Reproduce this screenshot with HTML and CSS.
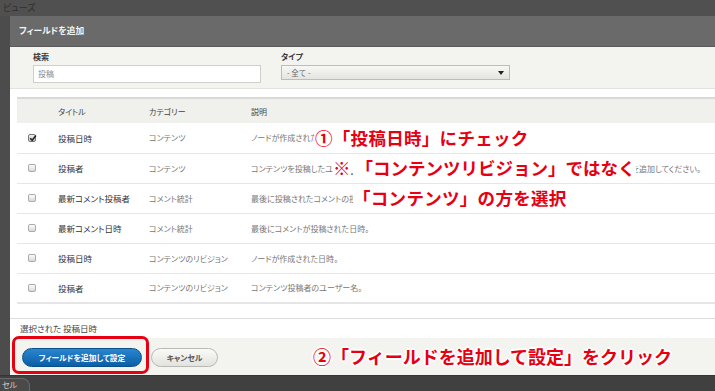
FILE: index.html
```html
<!DOCTYPE html>
<html>
	<head>
		<meta charset="UTF-8">
		<title>フィールドを追加</title>
		<link rel="stylesheet" href="styles.css">
	</head>
	<body>
		<div class="page-head">ビューズ</div>

		<div class="dialog">
			<div class="dialog-title">フィールドを追加</div>

			<div class="filters">
				<div class="filter filter-search">
					<label>検索</label>
					<div class="input">投稿</div>
				</div>
				<div class="filter filter-type">
					<label>タイプ</label>
					<div class="select">
						<span>- 全て -</span>
						<span class="select-arrow"></span>
					</div>
				</div>
			</div>

			<div class="scroll">
				<table class="fields">
					<thead>
						<tr>
							<th class="col-check"></th>
							<th class="col-title">タイトル</th>
							<th class="col-cat">カテゴリー</th>
							<th>説明</th>
						</tr>
					</thead>
					<tbody>
						<tr>
							<td class="col-check"><span class="cb checked"><svg viewBox="0 0 8 8"><path d="M1.2 4.2 L3.2 6.2 L6.9 1.6" fill="none" stroke="#222" stroke-width="1.6"/></svg></span></td>
							<td class="col-title">投稿日時</td>
							<td class="col-cat">コンテンツ</td>
							<td class="desc">ノードが作成された日時。</td>
						</tr>
						<tr>
							<td class="col-check"><span class="cb"></span></td>
							<td class="col-title">投稿者</td>
							<td class="col-cat">コンテンツ</td>
							<td class="desc">コンテンツを投稿したユーザー。ユーザー名、メールやプロフィールなどの情報を表示するにはリレーションシップを追加してください。</td>
						</tr>
						<tr>
							<td class="col-check"><span class="cb"></span></td>
							<td class="col-title">最新コメント投稿者</td>
							<td class="col-cat">コメント統計</td>
							<td class="desc">最後に投稿されたコメントの投稿者の名前。</td>
						</tr>
						<tr>
							<td class="col-check"><span class="cb"></span></td>
							<td class="col-title">最新コメント日時</td>
							<td class="col-cat">コメント統計</td>
							<td class="desc">最後にコメントが投稿された日時。</td>
						</tr>
						<tr>
							<td class="col-check"><span class="cb"></span></td>
							<td class="col-title">投稿日時</td>
							<td class="col-cat">コンテンツのリビジョン</td>
							<td class="desc">ノードが作成された日時。</td>
						</tr>
						<tr class="last">
							<td class="col-check"><span class="cb"></span></td>
							<td class="col-title">投稿者</td>
							<td class="col-cat">コンテンツのリビジョン</td>
							<td class="desc">コンテンツ投稿者のユーザー名。</td>
						</tr>
					</tbody>
				</table>
			</div>

			<div class="selected">選択された 投稿日時</div>

			<div class="footer">
				<span class="btn btn-primary">フィールドを追加して設定</span>
				<span class="btn btn-cancel">キャンセル</span>
			</div>
		</div>

		<div class="page-foot">
			<span class="back-btn">セル</span>
		</div>

		<!-- 注釈 -->
		<div class="note note-1">①「投稿日時」にチェック</div>
		<div class="note note-2">※<span class="note-dot">.</span>「コンテンツリビジョン」ではなく</div>
		<div class="note note-3">「コンテンツ」の方を選択</div>
		<div class="note note-4">②「フィールドを追加して設定」をクリック</div>
		<div class="highlight"></div>
	</body>
</html>
```

FILE: styles.css
```css
*{
	margin: 0;
	padding: 0;
	box-sizing: border-box;
}
body{
	width: 715px;
	height: 391px;
	overflow: hidden;
	position: relative;
	background-color: #4c4c4c;
	font-family: "Noto Sans CJK JP", "Noto Sans", sans-serif;
	font-feature-settings: "palt";
}
.page-head{
	height: 16px;
	line-height: 16px;
	padding-left: 3px;
	font-size: 9px;
	color: #2f2f2f;
	background-color: #505050;
}

/* ダイアログ */
.dialog{
	margin-left: 10px;
	width: 705px;
	height: 359px;
	display: flex;
	flex-direction: column;
	overflow: hidden;
}
.dialog-title{
	height: 31px;
	line-height: 30px;
	padding-left: 9px;
	background-color: #6a6a6a;
	border-bottom: 1px solid #5a5a5a;
	color: #f6f6f6;
	font-size: 8.75px;
	font-weight: bold;
}
.filters{
	height: 41px;
	padding: 5px 0 0 23px;
	display: flex;
	gap: 20px;
	background-color: #f3f3ef;
}
.filter label{
	display: block;
	height: 10px;
	line-height: 10px;
	font-size: 8px;
	font-weight: bold;
	color: #3a3a3a;
}
.filter-search{
	width: 228px;
}
.filter-type{
	width: 229px;
}
.input{
	margin-top: 3px;
	height: 18px;
	line-height: 16px;
	padding-left: 4px;
	background-color: #fff;
	border: 1px solid #cfcfcb;
	font-size: 8px;
	color: #8a8a8a;
}
.select{
	margin-top: 3px;
	height: 15px;
	line-height: 13px;
	padding: 0 5px 0 5px;
	display: flex;
	justify-content: space-between;
	align-items: center;
	background: linear-gradient(#f7f7f5, #e4e4e0);
	border: 1px solid #bdbdb8;
	font-size: 7.5px;
	color: #666;
	font-feature-settings: normal;
	white-space: pre;
}
.select-arrow{
	width: 0;
	height: 0;
	border-left: 3px solid transparent;
	border-right: 3px solid transparent;
	border-top: 4px solid #222;
}

/* 一覧 */
.scroll{
	height: 230px;
	padding: 8px 0 0 7px;
	background-color: #fff;
	border-top: 1px solid #e2e2de;
}
.fields{
	width: 720px;
	border-collapse: collapse;
	font-size: 8.5px;
	text-align: left;
}
.fields thead tr{
	height: 25px;
	background-color: #f0f0ec;
	border-top: 2px solid #d9d9d6;
}
.fields th{
	font-weight: normal;
	color: #444;
	font-size: 8px;
}
.fields tbody tr{
	height: 30px;
	border-bottom: 1px solid #e6e6e6;
}
.fields tbody tr.last{
	border-bottom: 2px solid #e6e6e6;
}
.col-check{
	width: 41px;
	padding-left: 11px;
}
.col-title{
	width: 91px;
	color: #333;
}
.col-cat{
	width: 102px;
	color: #777;
	font-size: 8px;
}
.desc{
	color: #777;
	font-size: 8px;
	white-space: nowrap;
}
.cb{
	display: block;
	width: 8px;
	height: 8px;
	border: 1px solid #aaa;
	border-radius: 2px;
	background: linear-gradient(#fdfdfd, #d8d8d8);
}
.cb svg{
	display: block;
	width: 8px;
	height: 8px;
	margin: -1px 0 0 0;
}
.cb.checked{
	border-color: #777;
	background: linear-gradient(#f0f0f0, #c8c8c8);
}
.selected{
	height: 20px;
	line-height: 19px;
	padding-left: 10px;
	background-color: #fff;
	border-top: 1px solid #dcdcdc;
	font-size: 8.5px;
	color: #444;
}
.footer{
	flex: 1;
	padding: 10px 0 0 12px;
	display: flex;
	gap: 9px;
	background-color: #f3f3ef;
	align-items: flex-start;
}
.btn{
	height: 19px;
	line-height: 17px;
	border-radius: 10px;
	text-align: center;
	font-size: 7.75px;
	font-weight: bold;
}
.btn-primary{
	width: 120px;
	background: linear-gradient(#2a86cf, #0a5ea7);
	border: 1px solid #0b4f8a;
	color: #fff;
}
.btn-cancel{
	width: 67px;
	background: linear-gradient(#fafaf8, #e2e2de);
	border: 1px solid #b8b8b4;
	color: #555;
}
.page-foot{
	height: 16px;
	padding-top: 2px;
	background-color: #404040;
	border-top: 1px solid #353535;
}
.back-btn{
	display: block;
	width: 30px;
	height: 20px;
	line-height: 12px;
	padding-left: 2px;
	border: 1px solid #6a6a6a;
	border-left: none;
	border-radius: 0 8px 8px 0;
	background-color: #4a4a4a;
	font-size: 8px;
	color: #cfcfcf;
}

/* 注釈 */
.note{
	position: absolute;
	height: 20px;
	line-height: 20px;
	font-size: 17.5px;
	font-weight: bold;
	color: #e60012;
	white-space: nowrap;
	letter-spacing: 0.3px;
	font-feature-settings: normal;
	text-shadow: 0 0 2px #fff, 1px 1px 0 #fff, -1px -1px 0 #fff, 1px -1px 0 #fff, -1px 1px 0 #fff, 2px 0 0 #fff, -2px 0 0 #fff, 0 2px 0 #fff, 0 -2px 0 #fff;
}
.note-1,.note-2,.note-3{
	background-color: #fff;
}
.note-1{
	left: 315px;
	top: 128px;
}
.note-2{
	left: 333px;
	top: 158px;
	letter-spacing: 0;
}
.note-dot{
	display: inline-block;
	width: 5px;
	font-size: 9px;
	color: #555;
	text-shadow: none;
}
.note-3{
	left: 353px;
	top: 188px;
}
.note-4{
	left: 313px;
	top: 346px;
	font-size: 18px;
	letter-spacing: 0;
}
.highlight{
	position: absolute;
	left: 12px;
	top: 336px;
	width: 137px;
	height: 38px;
	border: 3px solid #e60012;
	border-radius: 7px;
}
```
